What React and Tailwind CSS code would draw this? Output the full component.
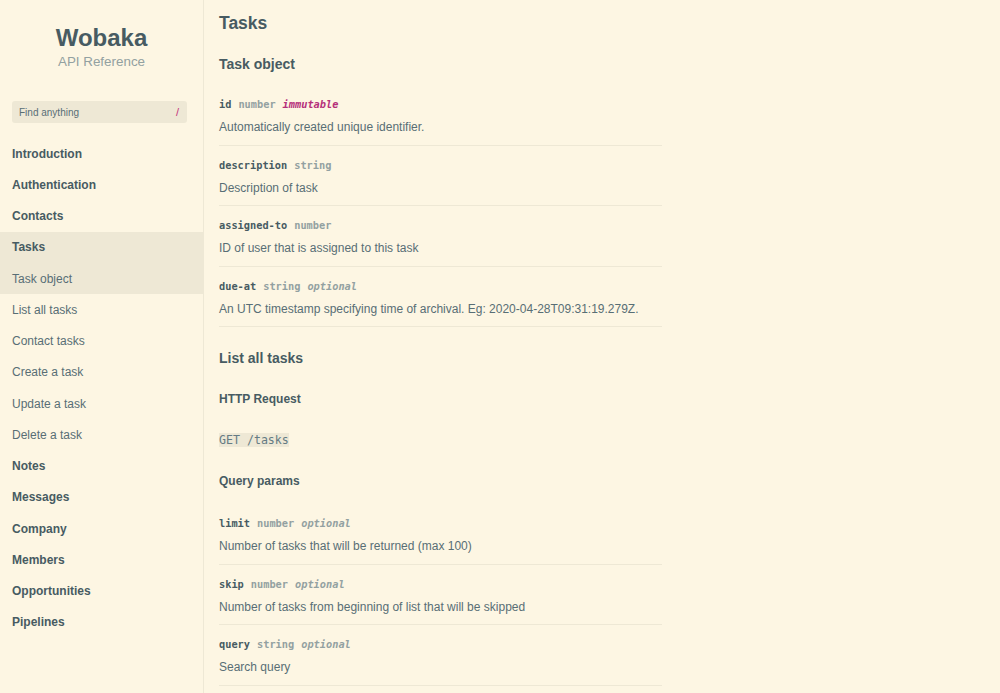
import React from 'react';

const navItems = [
  { label: 'Introduction', bold: true },
  { label: 'Authentication', bold: true },
  { label: 'Contacts', bold: true },
  { label: 'Tasks', bold: true, active: true },
  { label: 'Task object', active: true },
  { label: 'List all tasks' },
  { label: 'Contact tasks' },
  { label: 'Create a task' },
  { label: 'Update a task' },
  { label: 'Delete a task' },
  { label: 'Notes', bold: true },
  { label: 'Messages', bold: true },
  { label: 'Company', bold: true },
  { label: 'Members', bold: true },
  { label: 'Opportunities', bold: true },
  { label: 'Pipelines', bold: true },
];

const taskFields = [
  { name: 'id', type: 'number', flag: 'immutable', desc: 'Automatically created unique identifier.' },
  { name: 'description', type: 'string', desc: 'Description of task' },
  { name: 'assigned-to', type: 'number', desc: 'ID of user that is assigned to this task' },
  { name: 'due-at', type: 'string', flag: 'optional', desc: 'An UTC timestamp specifying time of archival. Eg: 2020-04-28T09:31:19.279Z.' },
];

const queryParams = [
  { name: 'limit', type: 'number', flag: 'optional', desc: 'Number of tasks that will be returned (max 100)' },
  { name: 'skip', type: 'number', flag: 'optional', desc: 'Number of tasks from beginning of list that will be skipped' },
  { name: 'query', type: 'string', flag: 'optional', desc: 'Search query' },
];

const mono = "font-['DejaVu_Sans_Mono',monospace]";

const Field = ({ field }) => (
  <div className="pt-[11px] pb-[8.5px] border-b border-[#eee8d5]">
    <div className={`${mono} text-[10.3px] leading-[16px]`}>
      <span className="font-bold text-[#475b62]">{field.name}</span>
      <span className="ml-[7px] font-bold text-[#93a1a1]">{field.type}</span>
      {field.flag && (
        <span
          className={`ml-[7px] font-bold italic ${
            field.flag === 'immutable' ? 'text-[#b5307a]' : 'text-[#93a1a1]'
          }`}
        >
          {field.flag}
        </span>
      )}
    </div>
    <div className="mt-[6px] text-[12px] leading-[18px] text-[#586e75]">{field.desc}</div>
  </div>
);

const App = () => {
  return (
    <div className="flex min-h-[693px] bg-[#fdf6e3] font-['Liberation_Sans',Arial,sans-serif] text-[#475b62]">
      <aside className="w-[204px] shrink-0 border-r border-[#eee8d5]">
        <div className="pt-[24px] text-center">
          <div className="text-[24px] leading-[28px] font-bold text-[#475b62]">Wobaka</div>
          <div className="text-[13.4px] leading-[20px] text-[#93a1a1]">API Reference</div>
        </div>
        <div className="mt-[29px] ml-[12px] mr-[16px] h-[22px] rounded-[3px] bg-[#eee8d5] flex items-center justify-between px-[7px] text-[10px]">
          <span className="text-[#586e75]">Find anything</span>
          <span className="text-[#c3307a] pr-[1px] text-[11px]">/</span>
        </div>
        <nav className="mt-[15px]">
          {navItems.map((item) => (
            <div
              key={item.label}
              className={`h-[31.25px] flex items-center px-[12px] text-[12px] ${
                item.bold ? 'font-bold text-[#475b62]' : 'text-[#586e75]'
              } ${item.active ? 'bg-[#eee8d5]' : ''}`}
            >
              {item.label}
            </div>
          ))}
        </nav>
      </aside>

      <main className="flex-1 pl-[15px] pt-[9px]">
        <div className="w-[443px]">
          <h1 className="text-[17.5px] leading-[28px] font-bold">Tasks</h1>
          <h2 className="mt-[16px] text-[14px] leading-[22px] font-bold">Task object</h2>
          <div className="mt-[10px]">
            {taskFields.map((f) => (
              <Field key={f.name} field={f} />
            ))}
          </div>

          <h2 className="mt-[20px] text-[14px] leading-[22px] font-bold">List all tasks</h2>
          <h3 className="mt-[21px] text-[12px] leading-[18px] font-bold">HTTP Request</h3>
          <div className="mt-[22px] leading-[18px]">
            <code className={`${mono} text-[11.6px] bg-[#eee8d5] text-[#657b83]`}>GET /tasks</code>
          </div>
          <h3 className="mt-[23px] text-[12px] leading-[18px] font-bold">Query params</h3>
          <div className="mt-[14px]">
            {queryParams.map((f) => (
              <Field key={f.name} field={f} />
            ))}
          </div>
        </div>
      </main>
    </div>
  );
};

export default App;
